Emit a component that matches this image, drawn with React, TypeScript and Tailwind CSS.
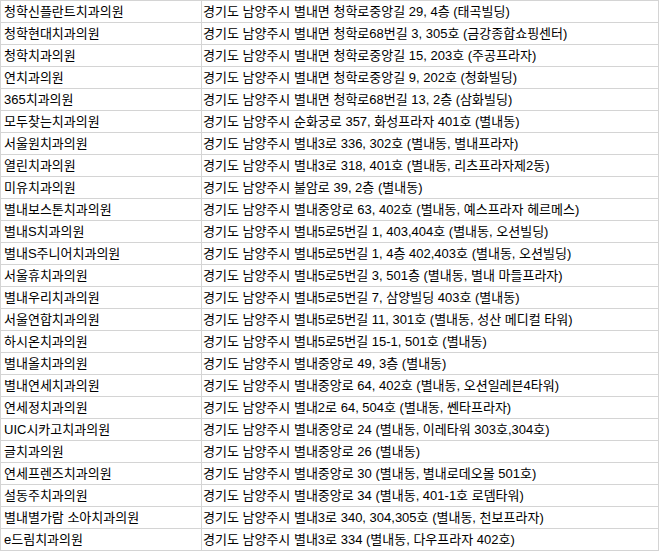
const clinics: [string, string][] = [
  ["청학신플란트치과의원", "경기도 남양주시 별내면 청학로중앙길 29, 4층 (태곡빌딩)"],
  ["청학현대치과의원", "경기도 남양주시 별내면 청학로68번길 3, 305호 (금강종합쇼핑센터)"],
  ["청학치과의원", "경기도 남양주시 별내면 청학로중앙길 15, 203호 (주공프라자)"],
  ["연치과의원", "경기도 남양주시 별내면 청학로중앙길 9, 202호 (청화빌딩)"],
  ["365치과의원", "경기도 남양주시 별내면 청학로68번길 13, 2층 (삼화빌딩)"],
  ["모두찾는치과의원", "경기도 남양주시 순화궁로 357, 화성프라자 401호 (별내동)"],
  ["서울원치과의원", "경기도 남양주시 별내3로 336, 302호 (별내동, 별내프라자)"],
  ["열린치과의원", "경기도 남양주시 별내3로 318, 401호 (별내동, 리츠프라자제2동)"],
  ["미유치과의원", "경기도 남양주시 불암로 39, 2층 (별내동)"],
  ["별내보스톤치과의원", "경기도 남양주시 별내중앙로 63, 402호 (별내동, 예스프라자 헤르메스)"],
  ["별내S치과의원", "경기도 남양주시 별내5로5번길 1, 403,404호 (별내동, 오션빌딩)"],
  ["별내S주니어치과의원", "경기도 남양주시 별내5로5번길 1, 4층 402,403호 (별내동, 오션빌딩)"],
  ["서울휴치과의원", "경기도 남양주시 별내5로5번길 3, 501층 (별내동, 별내 마들프라자)"],
  ["별내우리치과의원", "경기도 남양주시 별내5로5번길 7, 삼양빌딩 403호 (별내동)"],
  ["서울연합치과의원", "경기도 남양주시 별내5로5번길 11, 301호 (별내동, 성산 메디컬 타워)"],
  ["하시온치과의원", "경기도 남양주시 별내5로5번길 15-1, 501호 (별내동)"],
  ["별내올치과의원", "경기도 남양주시 별내중앙로 49, 3층 (별내동)"],
  ["별내연세치과의원", "경기도 남양주시 별내중앙로 64, 402호 (별내동, 오션일레븐4타워)"],
  ["연세정치과의원", "경기도 남양주시 별내2로 64, 504호 (별내동, 쎈타프라자)"],
  ["UIC시카고치과의원", "경기도 남양주시 별내중앙로 24 (별내동, 이레타워 303호,304호)"],
  ["글치과의원", "경기도 남양주시 별내중앙로 26 (별내동)"],
  ["연세프렌즈치과의원", "경기도 남양주시 별내중앙로 30 (별내동, 별내로데오몰 501호)"],
  ["설동주치과의원", "경기도 남양주시 별내중앙로 34 (별내동, 401-1호 로뎀타워)"],
  ["별내별가람 소아치과의원", "경기도 남양주시 별내3로 340, 304,305호 (별내동, 천보프라자)"],
  ["e드림치과의원", "경기도 남양주시 별내3로 334 (별내동, 다우프라자 402호)"],
];

export default function App() {
  return (
    <div className="w-[659px] bg-white font-['Liberation_Sans','Noto_Sans_CJK_KR',sans-serif] text-[13px] text-black">
      <table className="w-[659px] table-fixed border-collapse">
        <colgroup>
          <col className="w-[201px]" />
          <col />
        </colgroup>
        <tbody>
          {clinics.map(([name, address]) => (
            <tr key={name} className="h-[22px]">
              <td className="h-[22px] border border-[#d4d4d4] p-0 pl-[3px] leading-[21px] whitespace-nowrap">
                {name}
              </td>
              <td className="h-[22px] border border-[#d4d4d4] p-0 pl-[1px] leading-[21px] whitespace-nowrap">
                {address}
              </td>
            </tr>
          ))}
        </tbody>
      </table>
    </div>
  );
}
